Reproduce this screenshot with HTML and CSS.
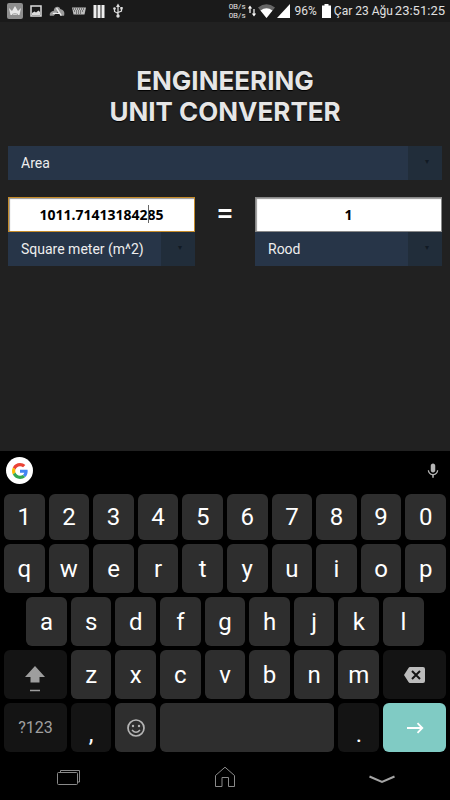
FILE: index.html
```html
<!DOCTYPE html>
<html lang="en">

<head>
    <meta charset="UTF-8">
    <meta name="viewport" content="width=device-width, initial-scale=1.0">
    <title>Engineering Unit Converter</title>
    <link rel="stylesheet" href="styles.css">
</head>

<body>

    <header class="status-bar">
        <div class="notifications">
            <svg width="16" height="16" viewBox="0 0 16 16">
                <rect width="16" height="16" rx="2" fill="#8e8e8e" />
                <path d="M2 5l3 3 3-5 3 5 3-3-1.5 7h-9z" fill="#e8e8e8" />
                <path d="M5 11.5c2-1 4-1 6 0" fill="none" stroke="#999" />
            </svg>
            <svg width="12" height="16" viewBox="0 0 12 16">
                <rect x="1" y="3" width="10" height="10" fill="none" stroke="#ddd" stroke-width="1.5" />
                <path d="M2 12V10l2.500-1.500 1.500 1L8.500 7.500 10 9v3z" fill="#ddd" />
            </svg>
            <svg width="16" height="16" viewBox="0 0 17 16">
                <path d="M1 13c-1-3 2-5 4-5 0-5 6-6 7-2 4 1 5 4 4 7h-3l-4-4-4 4z" fill="#9b9b9b" />
                <path d="M4 10.500h7M8 5l5 8" fill="none" stroke="#eee" stroke-width="1.5" />
            </svg>
            <svg width="14" height="16" viewBox="0 0 14 16">
                <path d="M0 4.500h14l-1.500 7h-11z" fill="#bdbdbd" />
                <path d="M1 6h12M2 8h10M4 10h6" stroke="#333" stroke-dasharray="1 1" />
            </svg>
            <svg width="12" height="16" viewBox="0 0 12 16">
                <path d="M2 2v13M6 2v13M10 2v13" stroke="#eee" stroke-width="3" />
            </svg>
            <svg width="12" height="16" viewBox="0 0 12 16">
                <path d="M6 3v10M6 10.5L2.500 8.500V6M6 9.500L9.500 8V5" fill="none" stroke="#ddd" stroke-width="1.2" />
                <path d="M4 4l2-3.500L8 4z" fill="#ddd" />
                <circle cx="6" cy="13" r="1.7" fill="#ddd" />
                <circle cx="2.5" cy="5.5" r="1.3" fill="#ddd" />
                <rect x="8.3" y="4" width="2.4" height="2.4" fill="#ddd" />
            </svg>
        </div>
        <div class="system">
            <div class="speed"><span>0B/s</span><span>0B/s</span></div>
            <svg width="8" height="12" viewBox="0 0 8 12">
                <path d="M2 8V2M.5 3.500L2 1.500l1.500 2M6 4v6M4.500 8.500L6 10.500l1.500-2" fill="none" stroke="#fff" stroke-width="1.2" />
            </svg>
            <svg width="17" height="14" viewBox="0 0 17 14">
                <path d="M0 3.500Q8.500-3 17 3.500L8.500 14z" fill="#666" />
                <path d="M2.500 6.500Q8.500 2 14.500 6.500L8.500 14z" fill="#fff" />
            </svg>
            <svg width="13" height="14" viewBox="0 0 13 14">
                <path d="M13 0v14H0z" fill="#fff" />
            </svg>
            <span class="level">96%</span>
            <svg width="9" height="14" viewBox="0 0 9 14">
                <path d="M0 1.500h2.500V0h4v1.500H9V14H0z" fill="#fff" />
            </svg>
            <span class="date">Çar 23 Ağu</span>
            <span class="time">23:51:25</span>
        </div>
    </header>

    <main class="app">
        <h1>ENGINEERING<br>UNIT CONVERTER</h1>

        <div class="dropdown">
            <select aria-label="Category">
                <option>Area</option>
            </select>
        </div>

        <div class="converter">
            <div class="unit">
                <div class="field">
                    <input class="active" type="text" value="1011.71413184285" aria-label="From value">
                    <span class="caret"></span>
                </div>
                <div class="dropdown">
                    <select aria-label="From unit">
                        <option>Square meter (m^2)</option>
                    </select>
                </div>
            </div>
            <div class="equals">=</div>
            <div class="unit">
                <div class="field">
                    <input type="text" value="1" aria-label="To value">
                </div>
                <div class="dropdown">
                    <select aria-label="To unit">
                        <option>Rood</option>
                    </select>
                </div>
            </div>
        </div>
    </main>

    <section class="keyboard">
        <div class="toolbar">
            <button class="google" aria-label="Google">
                <svg width="16" height="16" viewBox="0 0 48 48">
                    <path fill="#ea4335" d="M24 9.500c3.540 0 6.710 1.220 9.210 3.600l6.850-6.850C35.900 2.380 30.470 0 24 0 14.620 0 6.510 5.380 2.560 13.220l7.980 6.190C12.430 13.720 17.740 9.500 24 9.500z" />
                    <path fill="#4285f4" d="M46.980 24.550c0-1.570-.15-3.090-.38-4.550H24v9.020h12.940c-.58 2.960-2.260 5.480-4.780 7.180l7.730 6c4.510-4.180 7.090-10.360 7.090-17.650z" />
                    <path fill="#fbbc05" d="M10.530 28.590c-.48-1.450-.76-2.990-.76-4.590s.27-3.140.76-4.590l-7.980-6.190C.92 16.460 0 20.120 0 24s.92 7.540 2.560 10.780z" />
                    <path fill="#34a853" d="M24 48c6.480 0 11.930-2.130 15.890-5.810l-7.730-6c-2.150 1.450-4.920 2.300-8.160 2.300-6.260 0-11.570-4.220-13.470-9.910l-7.980 6.190C6.510 42.620 14.620 48 24 48z" />
                </svg>
            </button>
            <button class="mic" aria-label="Voice input">
                <svg width="18" height="18" viewBox="0 0 24 24" fill="#b5b5b5">
                    <path d="M12 14c1.660 0 3-1.340 3-3V5c0-1.660-1.340-3-3-3S9 3.340 9 5v6c0 1.660 1.340 3 3 3zm5.300-3c0 3-2.540 5.100-5.300 5.100S6.700 14 6.700 11H5c0 3.410 2.720 6.230 6 6.720V21h2v-3.280c3.280-.48 6-3.300 6-6.720z" />
                </svg>
            </button>
        </div>
        <div class="row numbers">
            <button>1</button>
            <button>2</button>
            <button>3</button>
            <button>4</button>
            <button>5</button>
            <button>6</button>
            <button>7</button>
            <button>8</button>
            <button>9</button>
            <button>0</button>
        </div>
        <div class="row">
            <button>q</button>
            <button>w</button>
            <button>e</button>
            <button>r</button>
            <button>t</button>
            <button>y</button>
            <button>u</button>
            <button>i</button>
            <button>o</button>
            <button>p</button>
        </div>
        <div class="row">
            <button class="indent">a</button>
            <button>s</button>
            <button>d</button>
            <button>f</button>
            <button>g</button>
            <button>h</button>
            <button>j</button>
            <button>k</button>
            <button>l</button>
        </div>
        <div class="row">
            <button class="wide dark" aria-label="Shift">
                <svg class="shift" width="20" height="26" viewBox="0 0 20 26">
                    <path d="M10 0L20 11h-5.500v5.500h-9V11H0z" fill="#9e9e9e" />
                    <path d="M5 24.500h10" stroke="#9e9e9e" stroke-width="1.5" />
                </svg>
            </button>
            <button>z</button>
            <button>x</button>
            <button>c</button>
            <button>v</button>
            <button>b</button>
            <button>n</button>
            <button>m</button>
            <button class="wide dark" aria-label="Backspace">
                <svg width="21" height="16" viewBox="0 0 21 16">
                    <path d="M6 0h13q2 0 2 2v12q0 2-2 2H6q-1 0-1.500-1L0 8l4.500-7Q5 0 6 0z" fill="#bcbcbc" />
                    <path d="M8 4l8 8M16 4l-8 8" stroke="#141414" stroke-width="2" />
                </svg>
            </button>
        </div>
        <div class="row">
            <button class="wide dark symbols">?123</button>
            <button class="dark punctuation">,</button>
            <button aria-label="Emoji">
                <svg width="18" height="18" viewBox="0 0 18 18">
                    <circle cx="9" cy="9" r="8" fill="none" stroke="#b5b5b5" stroke-width="1.7" />
                    <circle cx="6" cy="7" r="1.2" fill="#b5b5b5" />
                    <circle cx="12" cy="7" r="1.2" fill="#b5b5b5" />
                    <path d="M5 11q4 4.500 8 0" fill="none" stroke="#b5b5b5" stroke-width="1.5" />
                </svg>
            </button>
            <button class="space" aria-label="Space"></button>
            <button class="dark punctuation">.</button>
            <button class="wide enter" aria-label="Enter">
                <svg width="18" height="12" viewBox="0 0 18 12">
                    <path d="M1 6h15M11.500 1.200L16.300 6l-4.800 4.800" fill="none" stroke="#fff" stroke-width="1.8" />
                </svg>
            </button>
        </div>
    </section>

    <nav class="nav-bar">
        <button aria-label="Recent apps">
            <svg width="24" height="22" viewBox="0 0 24 22" fill="none" stroke="#8a8a8a">
                <rect x="0.5" y="6.500" width="20" height="12" rx="1" />
                <path d="M3.500 6V4.500h19v11.500h-1.500" />
            </svg>
        </button>
        <button aria-label="Home">
            <svg width="24" height="22" viewBox="0 0 24 22" fill="none" stroke="#8a8a8a">
                <path d="M2.500 9.500L12 1.200l9.500 8.300v11h-6v-9h-6.500v9H2.500z" />
            </svg>
        </button>
        <button aria-label="Hide keyboard">
            <svg width="26" height="22" viewBox="0 0 26 22" fill="none" stroke="#a5a5a5" stroke-width="2">
                <path d="M0.500 10.500L13 16l12.500-5.500" />
            </svg>
        </button>
    </nav>

</body>

</html>
```
FILE: styles.css
```css
* {
    box-sizing: border-box;
}

body {
    margin: 0;
    min-height: 100vh;
    display: flex;
    flex-direction: column;
    background-color: #212121;
    color: white;
    font-family: Roboto, sans-serif;
}

svg {
    display: block;
    flex: none;
}

button {
    margin: 0;
    padding: 0;
    border: none;
    background: none;
    color: white;
    font-family: inherit;
    cursor: pointer;
}

/* Status bar */
.status-bar {
    display: flex;
    justify-content: space-between;
    align-items: center;
    height: 22px;
    padding: 0 5px 0 7px;
    background-color: #1a1a1a;
    color: #e0e0e0;
    white-space: nowrap;
}

.notifications {
    display: flex;
    align-items: center;
    gap: 7px;
}

.system {
    display: flex;
    align-items: center;
    gap: 2px;
}

.speed {
    display: flex;
    flex-direction: column;
    font-size: 8px;
    line-height: 9px;
}

.level {
    padding: 0 3px;
    font-size: 12px;
}

.date {
    padding-left: 1px;
    font-size: 12px;
    line-height: 16px;
}

.time {
    font-size: 13px;
    line-height: 16px;
}

/* Converter */
.app {
    flex: 1;
    padding: 43px 8px 0;
}

h1 {
    margin: 0 0 19px;
    font-family: Inter, sans-serif;
    font-size: 26px;
    line-height: 31px;
    font-weight: 700;
    text-align: center;
    color: #e6e6e6;
    text-shadow: 0 1px 1px black;
}

.dropdown {
    position: relative;
}

.dropdown select {
    display: block;
    width: 100%;
    height: 34px;
    padding: 0 40px 0 13px;
    border: none;
    border-radius: 0;
    background-color: #273548;
    color: #eee;
    font-family: inherit;
    font-size: 14px;
    appearance: none;
}

.dropdown::after {
    content: "▾";
    box-sizing: border-box;
    position: absolute;
    top: 0;
    right: 0;
    width: 34px;
    height: 100%;
    padding-left: 4px;
    background-color: #212d3a;
    color: #111a24;
    font-family: "DejaVu Sans", sans-serif;
    font-size: 8px;
    line-height: 32px;
    text-align: center;
    pointer-events: none;
}

.converter {
    display: flex;
    margin-top: 17px;
}

.unit {
    flex: 1;
    min-width: 0;
}

.field {
    position: relative;
}

.field input {
    display: block;
    width: 100%;
    height: 35px;
    padding: 0;
    border: 1px solid #888;
    border-radius: 0;
    box-shadow: inset 1px 1px 1px #999;
    background-color: white;
    color: black;
    font-family: "Noto Sans", sans-serif;
    font-size: 14px;
    font-weight: 700;
    text-align: center;
    outline: none;
}

.field .active {
    border-color: #c58b2a;
}

.caret {
    position: absolute;
    top: 8px;
    left: 75%;
    width: 1px;
    height: 18px;
    background-color: #666;
}

.equals {
    width: 60px;
    font-size: 30px;
    line-height: 32px;
    font-weight: 500;
    text-align: center;
}

/* Keyboard */
.keyboard {
    padding: 0 2px;
    background-color: black;
}

.toolbar {
    display: flex;
    justify-content: space-between;
    align-items: center;
    height: 41px;
    padding: 0 6px 2px 4px;
}

.google {
    display: flex;
    justify-content: center;
    align-items: center;
    width: 27px;
    height: 27px;
    border-radius: 50%;
    background-color: white;
}

.row {
    display: grid;
    grid-template-columns: repeat(20, 1fr);
    height: 53px;
}

.row button {
    display: flex;
    justify-content: center;
    align-items: center;
    grid-column: span 2;
    margin: 2px;
    border-radius: 6px;
    background-color: #2e2e2e;
    font-size: 24px;
    line-height: 28px;
}

.numbers {
    height: 50px;
}

.row .indent {
    grid-column: 2 / span 2;
}

.row .wide {
    grid-column: span 3;
}

.row .space {
    grid-column: span 8;
}

.row .dark {
    background-color: #141414;
}

.row .symbols {
    color: #a0a0a0;
    font-size: 16px;
}

.row .punctuation {
    align-items: flex-end;
    padding-bottom: 4px;
}

.row .enter {
    background-color: #80cbc4;
}

.shift {
    margin-top: 8px;
}

/* Navigation bar */
.nav-bar {
    display: flex;
    justify-content: space-between;
    align-items: center;
    height: 46px;
    padding: 0 55px 0 57px;
    background-color: black;
}
```
